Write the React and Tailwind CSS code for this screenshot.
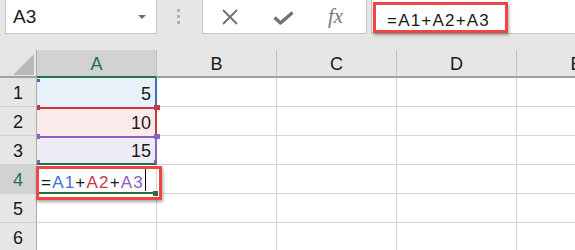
import React from 'react';

const cols = ['A', 'B', 'C', 'D', 'E'];
const rows = [1, 2, 3, 4, 5, 6];

function Toolbar() {
    return (
        <div className="flex h-[50px] items-start">
            {/* Name box */}
            <div className="ml-[5px] flex h-[34px] w-[152px] items-center justify-between border border-t-0 border-[#c6c6c6] bg-white pl-[7px] pr-[10px]">
                <span className="text-[19px] leading-none">A3</span>
                <svg width="8" height="4" viewBox="0 0 8 4">
                    <path d="M0 0h8L4 4z" fill="#6b6b6b" />
                </svg>
            </div>

            {/* Grip dots */}
            <div className="ml-[20px] mt-[9px] flex flex-col gap-[3px]">
                <span className="block h-[3px] w-[3px] bg-[#b0b0b0]" />
                <span className="block h-[3px] w-[3px] bg-[#b0b0b0]" />
                <span className="block h-[3px] w-[3px] bg-[#b0b0b0]" />
            </div>

            {/* Cancel / enter / function */}
            <div className="ml-[22px] flex h-[34px] w-[165px] items-center border border-t-0 border-[#c6c6c6] bg-white">
                <svg className="ml-[19px]" width="16" height="16" viewBox="0 0 16 16">
                    <path d="M1 1L15 15M15 1L1 15" stroke="#6e6e6e" strokeWidth="1.8" fill="none" />
                </svg>
                <svg className="ml-[35px] mt-[2px]" width="21" height="14" viewBox="0 0 21 14">
                    <path d="M1.5 6.5L7.5 12L19.5 1.5" stroke="#727272" strokeWidth="3.4" fill="none" strokeLinejoin="round" />
                </svg>
                <span className="ml-[34px] font-['Liberation_Serif',serif] text-[21px] italic leading-none text-[#7a7a7a]">
                    fx
                </span>
            </div>

            {/* Formula input */}
            <div className="ml-[4px] h-[34px] flex-1 border-b border-l border-[#c6c6c6] bg-white pl-[1px] pt-[2px]">
                <div className="flex h-[31px] w-[135px] items-center border-[3px] border-[#ee4545] pl-[11px] pt-[5px] shadow-[1px_2px_3px_rgba(0,0,0,0.35)]">
                    <span className="text-[17px] leading-none tracking-[1.2px]">=A1+A2+A3</span>
                </div>
            </div>
        </div>
    );
}

function ColHeader({ label }) {
    const active = label === 'A';
    return (
        <div
            className={`flex items-center justify-center border-r border-b-2 border-r-[#c0c0c0] pt-[2px] text-[18px] leading-none ${
                active ? 'border-b-[#217346] bg-[#d2d2d2] text-[#217346]' : 'border-b-[#a0a0a0] bg-[#e6e6e6] text-[#1a1a1a]'
            }`}
        >
            {label}
        </div>
    );
}

function RowHeader({ n }) {
    const active = n === 4;
    return (
        <div
            className={`flex items-center justify-center border-r border-b border-r-[#ababab] border-b-[#d0d0d0] pt-[2px] text-[18px] leading-none ${
                active ? 'bg-[#d2d2d2] text-[#217346]' : 'bg-[#e6e6e6] text-[#1a1a1a]'
            }`}
        >
            {n}
        </div>
    );
}

function CellA(n) {
    if (n === 1) {
        return (
            <div className="relative flex items-center justify-end border-r-2 border-[#3b6fc7] bg-[#e8f0f9] pr-[4px] pt-[2px] text-[18px] leading-none">
                5
                <span className="absolute left-0 top-[1px] h-[3px] w-[3px] bg-[#3b6fc7]" />
            </div>
        );
    }
    if (n === 2) {
        return (
            <div className="relative flex items-center justify-end border-t-2 border-r-2 border-[#c23a3f] bg-[#fbeaea] pr-[4px] pt-[1px] text-[18px] leading-none">
                10
                <span className="absolute left-0 top-[-4px] h-[5px] w-[3px] bg-[#c23a3f]" />
                <span className="absolute right-[-5px] top-[-4px] h-[5px] w-[6px] bg-[#c23a3f]" />
            </div>
        );
    }
    if (n === 3) {
        return (
            <div className="relative flex items-center justify-end border-t-2 border-r-2 border-b-2 border-t-[#8a62c2] border-r-[#8a62c2] border-b-[#217346] bg-[#f0ecf7] pr-[4px] text-[18px] leading-none">
                15
                <span className="absolute left-0 top-[-4px] h-[5px] w-[3px] bg-[#8a62c2]" />
                <span className="absolute right-[-5px] top-[-4px] h-[5px] w-[6px] bg-[#8a62c2]" />
                <span className="absolute bottom-[0px] left-0 h-[3px] w-[3px] bg-[#8a62c2]" />
                <span className="absolute bottom-[0px] right-[-2px] h-[3px] w-[3px] bg-[#8a62c2]" />
            </div>
        );
    }
    if (n === 4) {
        return (
            <div className="relative flex items-end border-r border-b-2 border-r-[#d4d4d4] border-b-[#217346] bg-white pb-[1px] pl-[4px] text-[17px] leading-none tracking-[1.2px]">
                <span>
                    =<span className="text-[#3c6fd0]">A1</span>+<span className="text-[#c8373f]">A2</span>+
                    <span className="text-[#8c5fc4]">A3</span>
                </span>
                <span className="ml-[1px] inline-block h-[22px] w-px bg-black" />
                <span className="absolute right-[-2px] top-[26px] h-[5px] w-[5px] bg-[#217346]" />
                <span className="absolute left-[-1px] top-[1px] z-10 h-[34px] w-[126px] border-[3px] border-[#ee4545] shadow-[1px_2px_3px_rgba(0,0,0,0.35)]" />
            </div>
        );
    }
    return <div className="border-r border-b border-[#d4d4d4] bg-white" />;
}

function Sheet() {
    return (
        <div className="grid grid-cols-[37px_120px_120px_120px_120px_120px] grid-rows-[28px_29px_29px_29px_29px_29px_29px]">
            {/* Corner */}
            <div className="flex items-end justify-end border-r border-b-2 border-r-[#ababab] border-b-[#a0a0a0] bg-[#e6e6e6] pb-[1px] pr-[2px]">
                <svg width="21" height="21" viewBox="0 0 21 21">
                    <path d="M21 0V21H0z" fill="#b9b9b9" />
                </svg>
            </div>
            {cols.map(c => (
                <ColHeader key={c} label={c} />
            ))}

            {rows.map(n => (
                <React.Fragment key={n}>
                    <RowHeader n={n} />
                    {CellA(n)}
                    {cols.slice(1).map(c => (
                        <div key={c} className="border-r border-b border-[#d4d4d4] bg-white" />
                    ))}
                </React.Fragment>
            ))}
        </div>
    );
}

export default function App() {
    return (
        <div className="h-[250px] w-[575px] overflow-hidden bg-[#e6e6e6] font-['Liberation_Sans',Arial,sans-serif] text-[#1a1a1a]">
            <Toolbar />
            <Sheet />
        </div>
    );
}
